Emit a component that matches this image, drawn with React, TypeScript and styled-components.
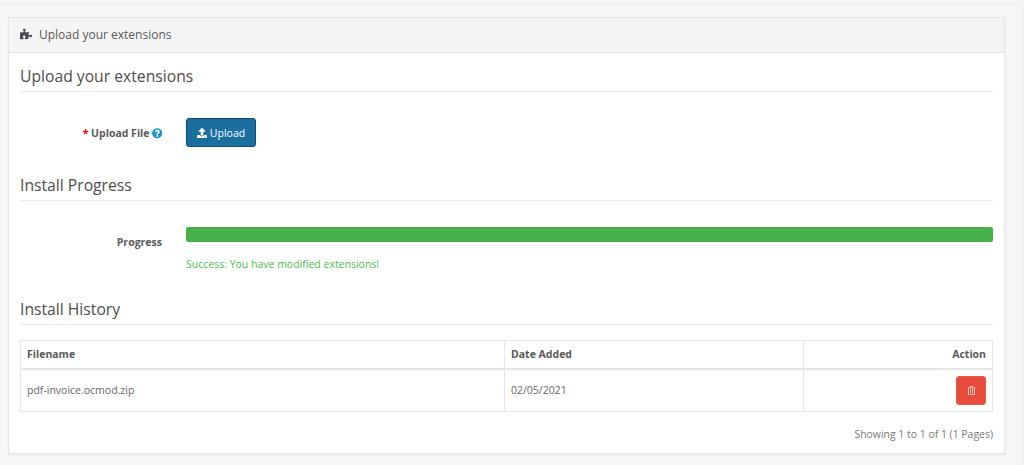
import { createGlobalStyle } from "styled-components";
import styled from "styled-components";
import { FaPuzzlePiece, FaUpload, FaQuestionCircle, FaRegTrashAlt } from "react-icons/fa";

const GlobalStyle = createGlobalStyle`
  html, body {
    margin: 0;
    height: 465px;
    overflow: hidden;
    background: #f6f6f6;
    font-family: "Open Sans", "Liberation Sans", sans-serif;
    color: #666;
  }
  * { box-sizing: border-box; }
`;

const Page = styled.div`
  height: 465px;
  padding: 4px 18px 0 8px;
  border-right: 1px solid #f0f0f0;
`;

const TopRule = styled.div`
  height: 1px;
  margin: 0 -18px 12px -8px;
  background: #eeeeee;
`;

const Panel = styled.section`
  height: 437px;
  background: #fff;
  border: 1px solid #e6e6e6;
  box-shadow: 0 1px 1px rgba(0, 0, 0, 0.05);
`;

const PanelHeading = styled.header`
  height: 35px;
  display: flex;
  align-items: center;
  gap: 7px;
  padding: 0 0 2px 11px;
  background: #f5f5f5;
  border-bottom: 1px solid #e2e2e2;
  font-size: 12px;
  color: #595959;
  svg { color: #4a4a55; font-size: 12px; }
`;

const PanelBody = styled.div`
  padding: 13px 11px 0 11px;
`;

const Legend = styled.h2`
  margin: 0;
  height: 26px;
  font-size: 15.7px;
  line-height: 20px;
  font-weight: 400;
  color: #4d4d4d;
  border-bottom: 1px solid #ececec;
`;

const FormRow = styled.div<{ $height: number }>`
  display: grid;
  grid-template-columns: 142px 1fr;
  column-gap: 24px;
  height: ${(p) => p.$height}px;
  padding-top: 26px;
`;

const Label = styled.label`
  display: flex;
  justify-content: flex-end;
  align-items: flex-start;
  gap: 2px;
  font-size: 10.5px;
  line-height: 30px;
  font-weight: 700;
  color: #595959;
`;

const Required = styled.span`
  color: #f00;
`;

const Help = styled(FaQuestionCircle)`
  color: #1e91cf;
  font-size: 10.5px;
  margin: 10px 0 0 0;
`;

const UploadButton = styled.button`
  display: inline-flex;
  align-items: center;
  justify-content: center;
  gap: 3px;
  width: 70px;
  height: 29px;
  padding: 0;
  background: #1a6f9f;
  border: 1px solid #0f4c70;
  border-radius: 3px;
  color: #fff;
  font-family: inherit;
  font-size: 10.5px;
  svg { font-size: 10px; }
`;

const ProgressBar = styled.div`
  height: 15px;
  background: #47b04b;
  border-radius: 2px;
`;

const Success = styled.div`
  margin-top: 15px;
  font-size: 10.5px;
  line-height: 14px;
  color: #4cbb50;
`;

const HistoryTable = styled.table`
  width: 100%;
  margin-top: 15px;
  border-collapse: collapse;
  table-layout: fixed;
  font-size: 10.5px;
  th, td {
    border: 1px solid #e6e6e6;
    padding: 0 6px;
  }
  th {
    height: 28px;
    border-bottom-width: 2px;
    font-weight: 700;
    color: #595959;
    text-align: left;
  }
  td {
    height: 43px;
    color: #666;
  }
`;

const ActionCell = styled.th`
  && { text-align: right; }
`;

const ActionData = styled.td`
  text-align: right;
`;

const DeleteButton = styled.button`
  display: inline-flex;
  align-items: center;
  justify-content: center;
  width: 30px;
  height: 29px;
  padding: 0;
  vertical-align: middle;
  background: #e74c3c;
  border: 1px solid #ea5a4b;
  border-radius: 3px;
  color: #fbdcd8;
  font-size: 9px;
`;

const Pagination = styled.div`
  margin-top: 15px;
  text-align: right;
  font-size: 10.45px;
  line-height: 14px;
  color: #777;
`;

export default function App() {
  return (
    <>
      <GlobalStyle />
      <Page>
        <TopRule />
        <Panel>
          <PanelHeading>
            <FaPuzzlePiece />
            Upload your extensions
          </PanelHeading>
          <PanelBody>
            <Legend>Upload your extensions</Legend>
            <FormRow $height={83}>
              <Label>
                <span>
                  <Required>*</Required> Upload File
                </span>
                <Help />
              </Label>
              <div>
                <UploadButton>
                  <FaUpload />
                  Upload
                </UploadButton>
              </div>
            </FormRow>
            <Legend>Install Progress</Legend>
            <FormRow $height={98}>
              <Label>Progress</Label>
              <div>
                <ProgressBar />
                <Success>Success: You have modified extensions!</Success>
              </div>
            </FormRow>
            <Legend>Install History</Legend>
            <HistoryTable>
              <colgroup>
                <col style={{ width: 484 }} />
                <col style={{ width: 299 }} />
                <col />
              </colgroup>
              <thead>
                <tr>
                  <th>Filename</th>
                  <th>Date Added</th>
                  <ActionCell>Action</ActionCell>
                </tr>
              </thead>
              <tbody>
                <tr>
                  <td>pdf-invoice.ocmod.zip</td>
                  <td>02/05/2021</td>
                  <ActionData>
                    <DeleteButton>
                      <FaRegTrashAlt />
                    </DeleteButton>
                  </ActionData>
                </tr>
              </tbody>
            </HistoryTable>
            <Pagination>Showing 1 to 1 of 1 (1 Pages)</Pagination>
          </PanelBody>
        </Panel>
      </Page>
    </>
  );
}
